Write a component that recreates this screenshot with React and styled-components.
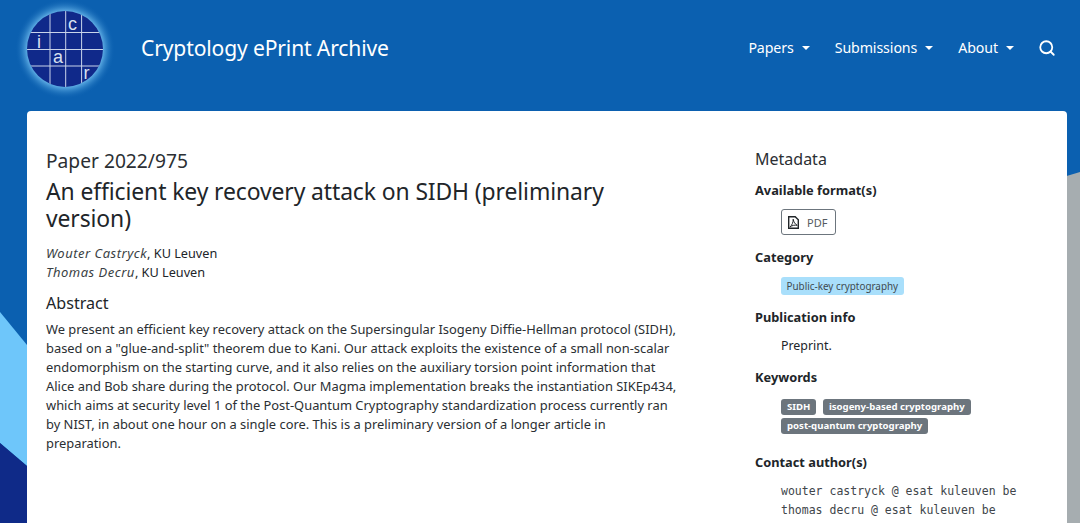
import React from 'react';
import styled, { createGlobalStyle } from 'styled-components';
import { Search } from 'lucide-react';

const GlobalStyle = createGlobalStyle`
  html, body {
    margin: 0;
    padding: 0;
    height: 100%;
    overflow: hidden;
    background: #0b60b0;
  }
  body {
    font-family: "Noto Sans", "Open Sans", sans-serif;
    color: #212529;
  }
`;

const Page = styled.div`
  position: relative;
  height: 523px;
  overflow: hidden;
`;

const Backdrop = styled.svg`
  position: absolute;
  inset: 0;
  width: 1080px;
  height: 523px;
`;

const Header = styled.header`
  position: relative;
  height: 111px;
  display: flex;
  align-items: center;
  padding: 0 24px 16px 25px;
  box-sizing: border-box;
  color: #fff;
`;

const Logo = styled.svg`
  width: 80px;
  height: 80px;
  flex: none;
  margin-top: 2px;
  overflow: visible;
`;

const Brand = styled.div`
  margin-left: 36px;
  font-size: 21.1px;
  letter-spacing: -0.15px;
`;

const Nav = styled.nav`
  margin-left: auto;
  display: flex;
  align-items: center;
  gap: 25px;
  font-size: 14.2px;
`;

const NavItem = styled.div`
  display: flex;
  align-items: center;
  gap: 8px;
  letter-spacing: -0.1px;

  &::after {
    content: '';
    border-top: 4px solid #fff;
    border-left: 4px solid transparent;
    border-right: 4px solid transparent;
  }
`;

const SearchIcon = styled(Search)`
  margin-left: -1px;
`;

const Card = styled.main`
  position: relative;
  margin: 0 13px 0 27px;
  height: 440px;
  background: #fff;
  border-radius: 4px 4px 0 0;
  padding: 38px 0 0 19px;
  box-sizing: border-box;
  display: grid;
  grid-template-columns: 709px 1fr;
`;

const Subtitle = styled.h4`
  margin: 0 0 5px;
  font-size: 19.2px;
  line-height: 24px;
  font-weight: 400;
  color: #2b2f33;
`;

const Title = styled.h3`
  margin: 0;
  width: 600px;
  font-size: 22.9px;
  line-height: 27px;
  font-weight: 400;
  letter-spacing: -0.1px;
  color: #212529;
`;

const Authors = styled.div`
  margin-top: 12px;
  font-size: 12.7px;
  line-height: 19px;

  em {
    font-size: 13px;
    letter-spacing: 0.5px;
    color: #3a3f44;
  }
`;

const Sub = styled.h5`
  margin: 10px 0 0;
  font-size: 16.1px;
  line-height: 22px;
  font-weight: 400;
`;

const Abstract = styled.p`
  margin: 6px 0 0;
  font-size: 12.9px;
  line-height: 19px;
  white-space: nowrap;
  color: #2b2f33;
`;

const Side = styled.aside`
  display: flex;
  flex-direction: column;
`;

const SideTitle = styled.h5`
  margin: 0;
  font-size: 16px;
  line-height: 20px;
  font-weight: 400;
  color: #2b2f33;
`;

const Label = styled.div`
  font-size: 12.8px;
  line-height: 18px;
  font-weight: 700;
  margin-top: ${(p) => p.$top}px;
`;

const Indent = styled.div`
  margin-left: 26px;
  margin-top: ${(p) => p.$top}px;
`;

const PdfButton = styled.div`
  width: 55px;
  height: 26px;
  box-sizing: border-box;
  border: 1px solid #6c757d;
  border-radius: 3px;
  display: flex;
  align-items: center;
  gap: 8px;
  padding-left: 6px;
  font-size: 11px;
  color: #555b61;
`;

const PdfIcon = styled.svg`
  width: 11px;
  height: 13px;
  flex: none;
`;

const Badge = styled.span`
  display: inline-block;
  height: ${(p) => (p.$info ? 18 : 16)}px;
  line-height: ${(p) => (p.$info ? 19 : 15)}px;
  padding: 0 ${(p) => (p.$info ? 5.5 : 6)}px;
  border-radius: 3px;
  font-size: ${(p) => (p.$info ? 9.9 : 9.6)}px;
  font-weight: ${(p) => (p.$info ? 400 : 700)};
  background: ${(p) => (p.$info ? '#a9dffb' : '#6c757d')};
  color: ${(p) => (p.$info ? '#3f4a50' : '#fff')};
  margin-right: ${(p) => (p.$gap ? 6.5 : 0)}px;
`;

const BadgeRow = styled.div`
  height: 19px;
`;

const Plain = styled.div`
  font-size: 12.4px;
  line-height: 18px;
`;

const Mono = styled.div`
  font-family: "DejaVu Sans Mono", "Liberation Mono", monospace;
  font-size: 11.5px;
  line-height: 19px;
  color: #40454a;
`;

const abstractLines = [
  'We present an efficient key recovery attack on the Supersingular Isogeny Diffie-Hellman protocol (SIDH),',
  'based on a "glue-and-split" theorem due to Kani. Our attack exploits the existence of a small non-scalar',
  'endomorphism on the starting curve, and it also relies on the auxiliary torsion point information that',
  'Alice and Bob share during the protocol. Our Magma implementation breaks the instantiation SIKEp434,',
  'which aims at security level 1 of the Post-Quantum Cryptography standardization process currently ran',
  'by NIST, in about one hour on a single core. This is a preliminary version of a longer article in',
  'preparation.',
];

const App = () => {
  return (
    <Page>
      <GlobalStyle />
      <Backdrop viewBox="0 0 1080 523">
        <polygon points="0,312 27,345 27,466 0,443" fill="#6ec6fa" />
        <polygon points="0,443 27,466 27,523 0,523" fill="#0f2a88" />
        <polygon points="1060,178 1080,172 1080,523 1060,523" fill="#a6adb0" />
      </Backdrop>
      <Header>
        <Logo viewBox="0 0 80 80">
          <defs>
            <radialGradient id="halo">
              <stop offset="0.76" stopColor="#5aa9e2" />
              <stop offset="1" stopColor="#0b60b0" stopOpacity="0" />
            </radialGradient>
            <clipPath id="disc">
              <circle cx="40" cy="40" r="38" />
            </clipPath>
          </defs>
          <circle cx="40" cy="40" r="50" fill="url(#halo)" />
          <circle cx="40" cy="40" r="38" fill="#10298a" />
          <g clipPath="url(#disc)" stroke="#c9d4ea" strokeWidth="1">
            <path d="M25 0V80M40.7 0V80M56.6 0V80M0 23.5H80M0 40.5H80M0 57H80" fill="none" />
          </g>
          <g fill="#d8e0f0" fontFamily="Liberation Sans, sans-serif" fontSize="18">
            <text x="43" y="20.5">c</text>
            <text x="12" y="38.5">i</text>
            <text x="28" y="54">a</text>
            <text x="58.5" y="70">r</text>
          </g>
        </Logo>
        <Brand>Cryptology ePrint Archive</Brand>
        <Nav>
          <NavItem>Papers</NavItem>
          <NavItem>Submissions</NavItem>
          <NavItem>About</NavItem>
          <SearchIcon size={18} strokeWidth={2.4} color="#fff" />
        </Nav>
      </Header>
      <Card>
        <div>
          <Subtitle>Paper 2022/975</Subtitle>
          <Title>An efficient key recovery attack on SIDH (preliminary version)</Title>
          <Authors>
            <em>Wouter Castryck</em>, KU Leuven
            <br />
            <em>Thomas Decru</em>, KU Leuven
          </Authors>
          <Sub>Abstract</Sub>
          <Abstract>
            {abstractLines.map((line) => (
              <React.Fragment key={line}>
                {line}
                <br />
              </React.Fragment>
            ))}
          </Abstract>
        </div>
        <Side>
          <SideTitle>Metadata</SideTitle>
          <Label $top={12}>Available format(s)</Label>
          <Indent $top={10}>
            <PdfButton>
              <PdfIcon viewBox="0 0 11 13" fill="none" stroke="#212529">
                <path d="M.7.7H7.2L10.3 3.8V12.3H.7Z" strokeWidth="1.4" />
                <path d="M5.2 3.2C5.3 6.2 4 9.2 2 11C4 9.4 6.6 8.8 9.2 9.3C7.2 8.2 5.6 6 5.2 3.2Z" strokeWidth="1" />
              </PdfIcon>
              PDF
            </PdfButton>
          </Indent>
          <Label $top={13}>Category</Label>
          <Indent $top={7}>
            <Badge $info>Public-key cryptography</Badge>
          </Indent>
          <Label $top={13}>Publication info</Label>
          <Indent $top={11}>
            <Plain>Preprint.</Plain>
          </Indent>
          <Label $top={13}>Keywords</Label>
          <Indent $top={7}>
            <BadgeRow>
              <Badge $gap>SIDH</Badge>
              <Badge>isogeny-based cryptography</Badge>
            </BadgeRow>
            <BadgeRow>
              <Badge>post-quantum cryptography</Badge>
            </BadgeRow>
          </Indent>
          <Label $top={22}>Contact author(s)</Label>
          <Indent $top={11}>
            <Mono>wouter castryck @ esat kuleuven be</Mono>
            <Mono>thomas decru @ esat kuleuven be</Mono>
          </Indent>
        </Side>
      </Card>
    </Page>
  );
};

export default App;
